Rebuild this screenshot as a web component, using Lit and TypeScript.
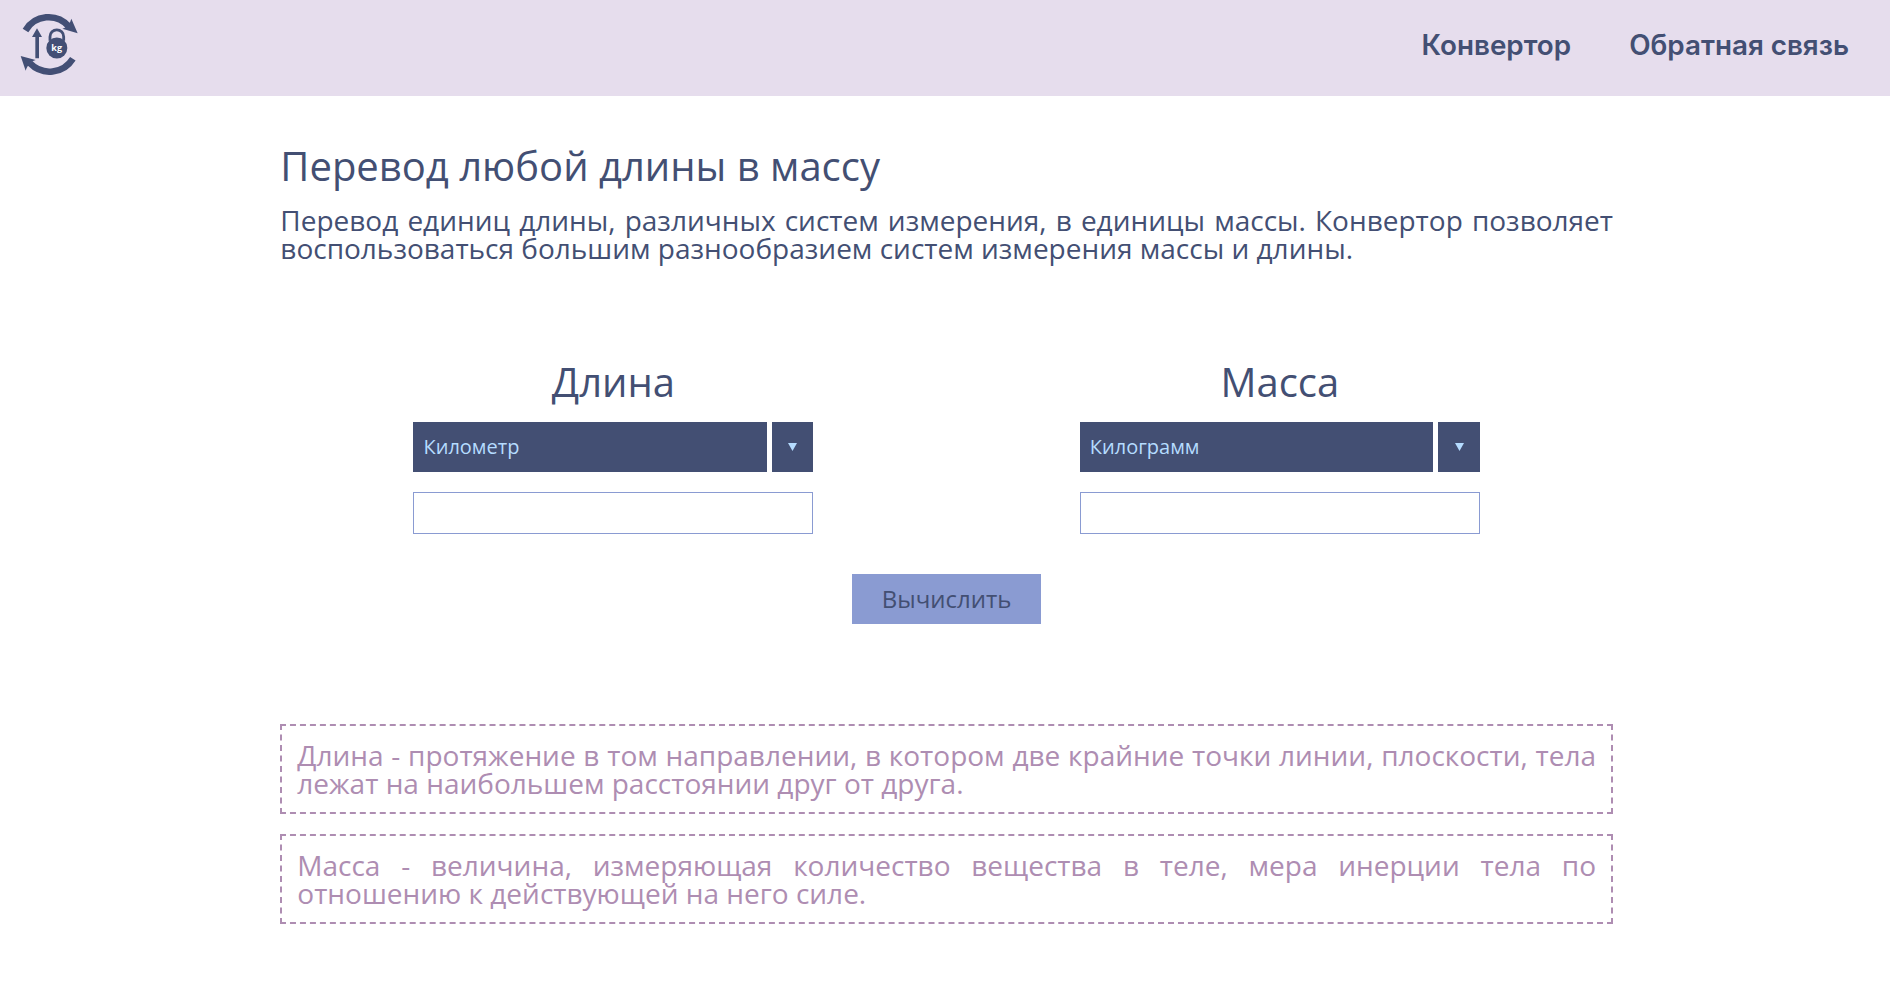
import { LitElement, html, css } from "lit";
import { customElement, property } from "lit/decorators.js";

@customElement("app-logo")
export class AppLogo extends LitElement {
  static styles = css`
    :host { display: block; width: 60px; height: 65px; }
    svg { display: block; }
    .stroke { fill: none; stroke: #434f75; stroke-width: 19.5; }
    .solid { fill: #434f75; }
    .handle { fill: none; stroke: #434f75; stroke-width: 8.5; }
    .label { fill: #fff; font: 700 27px "Open Sans", sans-serif; text-anchor: middle; }
  `;
  render() {
    return html`
      <svg width="60" height="65" viewBox="60 36 180 195">
        <path class="stroke" d="M76.500 91.500A80 80 0 0 1 206 79" />
        <path class="solid" d="M214 56L233 100L187 86Q200 82 203 74Q212 68 214 56Z" />
        <path class="stroke" d="M218.500 176A82 82 0 0 1 90 190" />
        <path class="solid" d="M62 168L107 180Q94 184 91 191Q81 197 77 212Z" />
        <path class="solid" d="M111 85L126 111H117V175H106V111H96Z" />
        <path class="handle" d="M150 122V110A20.500 20.500 0 0 1 191 110V122" />
        <circle class="solid" cx="170.500" cy="144" r="31.500" />
        <text class="label" x="170" y="153">kg</text>
      </svg>
    `;
  }
}

@customElement("unit-field")
export class UnitField extends LitElement {
  static styles = css`
    :host { display: flex; flex-direction: column; align-items: stretch; gap: 20px; width: 400px; }
    .title { margin: 0; font-size: 40px; line-height: 40px; font-weight: 400; text-align: center; }
    .select { display: flex; gap: 5px; height: 50px; color: #b5dcff; font-size: 20px; line-height: 50px; cursor: pointer; }
    .value { flex: 1; padding-left: 10px; background: #434f73; }
    .arrow { display: flex; align-items: center; justify-content: center; width: 41.4px; background: #434f73; }
    .arrow svg { fill: #b5dcff; }
    .input {
      box-sizing: border-box; width: 100%; height: 42px; margin: 0; padding: 0 10px;
      border: 1px solid #8a9bd2; border-radius: 0; background: #fff;
      color: inherit; font: inherit; font-size: 20px; outline: none;
    }
  `;
  @property() heading = "";
  @property() unit = "";
  render() {
    return html`
      <h2 class="title">${this.heading}</h2>
      <div class="select">
        <div class="value">${this.unit}</div>
        <div class="arrow"><svg width="9" height="8" viewBox="0 0 9 8"><path d="M0 0H9L4.500 8Z" /></svg></div>
      </div>
      <input class="input" type="text" aria-label=${this.heading} />
    `;
  }
}

@customElement("app-root")
export class AppRoot extends LitElement {
  static styles = css`
    :host {
      display: block; min-height: 1002px; background: #fff; color: #434f73;
      font-family: "Open Sans", "Noto Sans", sans-serif;
    }
    .header {
      display: flex; justify-content: space-between; align-items: flex-start; box-sizing: border-box;
      height: 96px; padding: 12px 41px 0 20px; background: #e6dded;
    }
    .nav { display: flex; gap: 58px; padding-top: 16px; }
    .link {
      color: inherit; text-decoration: none; white-space: nowrap;
      font: 600 27.800px/34px Inter, "Open Sans", sans-serif;
    }
    .main { width: 1332.7px; margin-left: 280.3px; padding-top: 50px; }
    .title { margin: 0 0 20px; font-size: 40px; line-height: 40px; font-weight: 400; }
    .text { margin: 0; font-size: 28px; line-height: 28px; text-align: justify; }
    .fields { display: grid; grid-template-columns: 1fr 1fr; justify-items: center; margin-top: 100px; }
    .actions { display: flex; justify-content: center; margin: 40px 0 100px; }
    .button {
      width: 189px; height: 50px; padding: 0 0 2px; border: 0; background: #8a9bd2; color: #434f73;
      font: 400 24px "Open Sans", sans-serif; cursor: pointer;
    }
    .notes { display: flex; flex-direction: column; gap: 20px; }
    .note { padding: 15px; border: 2px dashed #ae8db2; color: #ae8db2; }
  `;
  render() {
    return html`
      <header class="header">
        <app-logo></app-logo>
        <nav class="nav">
          <a class="link" href="#">Конвертор</a>
          <a class="link" href="#">Обратная связь</a>
        </nav>
      </header>
      <main class="main">
        <h1 class="title">Перевод любой длины в массу</h1>
        <p class="text">
          Перевод единиц длины, различных систем измерения, в единицы массы. Конвертор позволяет
          воспользоваться большим разнообразием систем измерения массы и длины.
        </p>
        <div class="fields">
          <unit-field heading="Длина" unit="Километр"></unit-field>
          <unit-field heading="Масса" unit="Килограмм"></unit-field>
        </div>
        <div class="actions"><button class="button">Вычислить</button></div>
        <div class="notes">
          <p class="text note">
            Длина - протяжение в том направлении, в котором две крайние точки линии, плоскости, тела
            лежат на наибольшем расстоянии друг от друга.
          </p>
          <p class="text note">
            Масса - величина, измеряющая количество вещества в теле, мера инерции тела по отношению к
            действующей на него силе.
          </p>
        </div>
      </main>
    `;
  }
}
